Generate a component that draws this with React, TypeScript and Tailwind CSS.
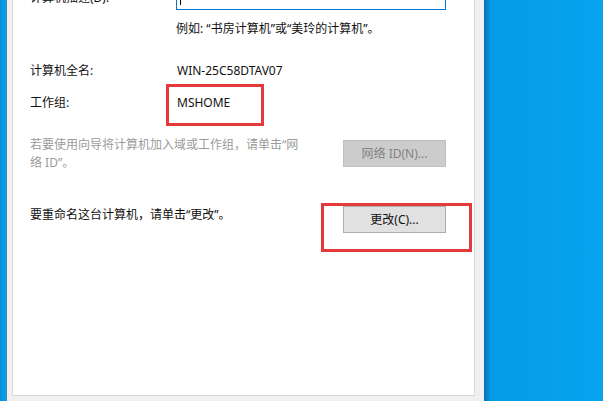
import React from "react";

const font = { fontFamily: '"Noto Sans", "Noto Sans CJK SC", sans-serif' };

export default function App() {
  return (
    <div className="w-[603px] h-[401px] flex overflow-hidden bg-[#06a0ec]" style={font}>
      {/* left desktop strip */}
      <div className="w-[6px] h-full bg-gradient-to-r from-[#0b8fd6] to-[#0aa0ea]" />

      {/* dialog */}
      <div className="w-[478px] h-full bg-[#f0f0f0] border-l border-[#4a86b4] pl-[5px] pr-[9px] pb-[5px] flex">
        <div className="relative flex-1 bg-white border-x border-b border-[#d9d9d9] pl-[17px] text-[12px] text-[#111] overflow-hidden">
          {/* description row, scrolled off the top */}
          <div className="flex items-center mt-[-14px]">
            <span className="w-[146px] leading-[16px]">计算机描述(D):</span>
            <div className="w-[270px] h-[24px] border border-[#0078d7] flex items-center pl-[3px]">
              <span className="w-px h-[14px] bg-black" />
            </div>
          </div>
          <p className="ml-[146px] mt-[11px] leading-[16px]">例如: “书房计算机”或“美玲的计算机”。</p>

          <div className="flex mt-[26px] leading-[16px]">
            <span className="w-[147px]">计算机全名:</span>
            <span>WIN-25C58DTAV07</span>
          </div>
          <div className="flex mt-[16px] leading-[16px]">
            <span className="w-[147px]">工作组:</span>
            <span>MSHOME</span>
          </div>

          <div className="flex items-start mt-[25px]">
            <p className="w-[313px] leading-[18px] text-[#9b9b9b]">
              若要使用向导将计算机加入域或工作组，请单击“网
              <br />
              络 ID”。
            </p>
            <button className="mt-[4px] w-[103px] h-[27px] bg-[#cccccc] border border-[#bfbfbf] text-[#838383] leading-none">
              网络 ID(N)...
            </button>
          </div>

          <div className="flex items-start mt-[34px]">
            <p className="w-[313px] leading-[18px]">要重命名这台计算机，请单击“更改”。</p>
            <button className="w-[103px] h-[27px] bg-[#e1e1e1] border border-[#adadad] text-[#111] leading-none">
              更改(C)...
            </button>
          </div>

          {/* red annotation boxes */}
          <div className="absolute left-[153px] top-[84px] w-[98px] h-[42px] border-[3px] border-[#e6393c]" />
          <div className="absolute left-[308px] top-[203px] w-[151px] h-[49px] border-[3px] border-[#e6393c]" />
        </div>
      </div>

      {/* desktop on the right */}
      <div className="flex-1 h-full bg-gradient-to-r from-[#046fb5] via-[#059be6] via-[6%] to-[#07a3ee]" />
    </div>
  );
}
